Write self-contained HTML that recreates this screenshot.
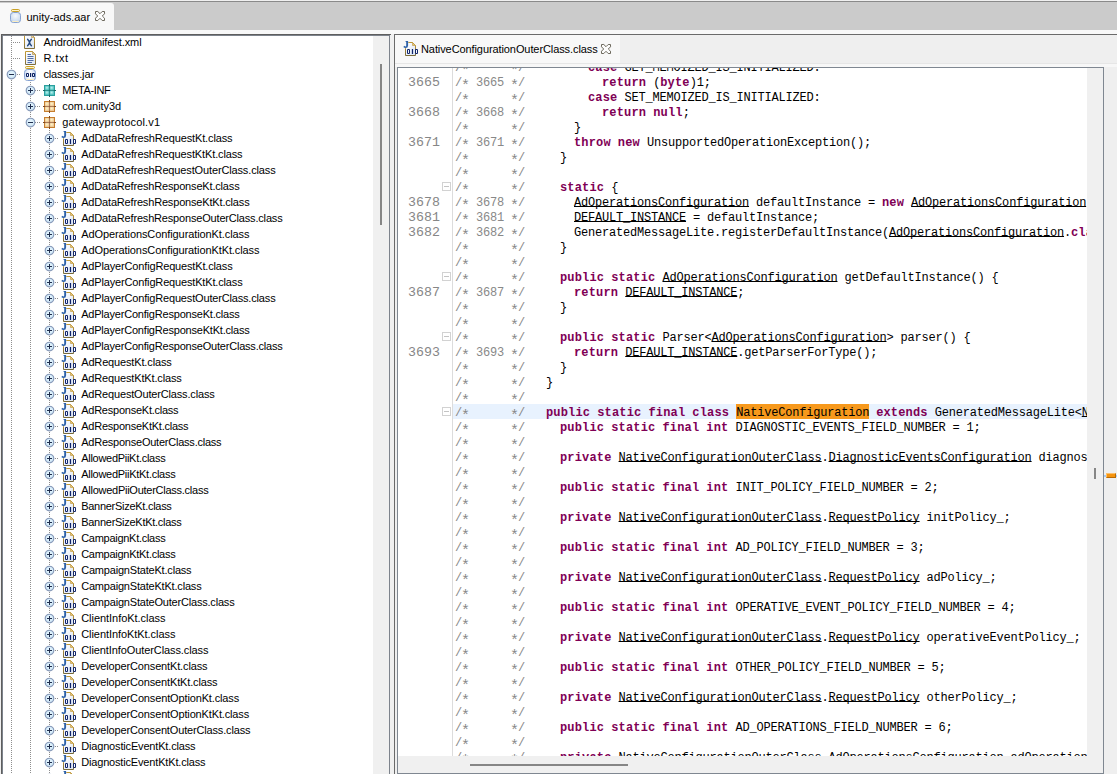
<!DOCTYPE html>
<html><head><meta charset="utf-8"><title>JD-GUI</title>
<style>
*{margin:0;padding:0;box-sizing:border-box}
html,body{width:1117px;height:774px;overflow:hidden;background:#f0f0f0}
body{position:relative;font-family:"Liberation Sans",sans-serif;font-size:11px;color:#000}
.ab,.hd,.vd,.tl,.cl,.gn,.fold,.hl,.r{position:absolute;display:block}
.r{position:absolute}
.tl{height:16px;line-height:16px;white-space:nowrap;font-size:11px;letter-spacing:-0.17px}
.hd{height:1px;background:repeating-linear-gradient(90deg,#8e8e8e 0 1px,transparent 1px 2px)}
.vd{width:1px;background:repeating-linear-gradient(180deg,#8e8e8e 0 1px,transparent 1px 2px)}
#tree{position:absolute;left:3px;top:36px;width:386px;height:738px;background:#fff;overflow:hidden}
#treein{position:absolute;left:-3px;top:-36px;width:400px;height:800px}
#code{position:absolute;left:398px;top:68px;width:689px;height:688px;background:#fff;overflow:hidden}
#codein{position:absolute;left:-398px;top:-68px;width:1117px;height:900px}
.cl{height:15px;line-height:15px;white-space:pre;font-family:"Liberation Mono",monospace;font-size:12px;letter-spacing:-0.2px;color:#000}
.c{color:#888}
.as{position:absolute;font-family:"Liberation Mono",monospace;font-size:15px;line-height:20px;height:20px;color:#888}
.k{color:#7f0055;font-weight:bold;letter-spacing:0.17px}
.u{text-decoration:underline;text-decoration-thickness:1px;text-underline-offset:0px;text-decoration-skip-ink:none}
.m{background:#f7991c}
.hl{left:453px;width:640px;height:15px;background:#e8f2fe}
.gn{left:398px;width:42px;text-align:right;height:15px;line-height:15px;font-family:"Liberation Mono",monospace;font-size:13.3px;color:#868686;white-space:pre}
.fold{left:442px;width:9px;height:9px;border:1px solid #d2d2d2;background:#fff}
.fold:after{content:"";position:absolute;left:1px;top:3px;width:5px;height:1px;background:#c4c4c4}
.tabt{position:absolute;white-space:nowrap;font-size:11px;height:16px;line-height:16px}
</style></head>
<body>
<svg width="0" height="0" style="position:absolute">
<defs>
<radialGradient id="gex" cx="0.5" cy="0.45" r="0.6"><stop offset="0" stop-color="#eefaff"/><stop offset="0.6" stop-color="#d4ebf9"/><stop offset="1" stop-color="#b0c3dc"/></radialGradient>
<linearGradient id="gpg" x1="0" y1="0" x2="1" y2="1"><stop offset="0" stop-color="#ffffff"/><stop offset="1" stop-color="#dbe5f5"/></linearGradient>
<radialGradient id="gtan" cx="0.45" cy="0.4" r="0.6"><stop offset="0" stop-color="#fff6c4"/><stop offset="0.5" stop-color="#f7dfb0"/><stop offset="1" stop-color="#ebc795"/></radialGradient>
<radialGradient id="gteal" cx="0.45" cy="0.4" r="0.6"><stop offset="0" stop-color="#c4f0ee"/><stop offset="0.5" stop-color="#86dad8"/><stop offset="1" stop-color="#52c2c0"/></radialGradient>
<linearGradient id="gjar" x1="0" y1="0" x2="1" y2="0"><stop offset="0" stop-color="#c9d9f2"/><stop offset="0.5" stop-color="#ffffff"/><stop offset="1" stop-color="#c9d9f2"/></linearGradient>
<radialGradient id="gjar0" cx="0.5" cy="0.35" r="0.65"><stop offset="0" stop-color="#f6f9fd"/><stop offset="1" stop-color="#c4d6ee"/></radialGradient>
<linearGradient id="gout" gradientUnits="userSpaceOnUse" x1="0" y1="0" x2="0" y2="16"><stop offset="0" stop-color="#c59c33"/><stop offset="0.5" stop-color="#ab8a3a"/><stop offset="1" stop-color="#75683a"/></linearGradient>
</defs>
<!-- expander plus -->
<symbol id="exp" viewBox="0 0 11 11">
<circle cx="5.5" cy="5.5" r="4.3" fill="url(#gex)" stroke="#8497b7" stroke-width="1.15"/>
<path d="M3 5.5H8M5.5 3V8" stroke="#1e2c4c" stroke-width="1" fill="none"/>
</symbol>
<!-- expander minus -->
<symbol id="exm" viewBox="0 0 11 11">
<circle cx="5.5" cy="5.5" r="4.3" fill="url(#gex)" stroke="#8497b7" stroke-width="1.15"/>
<path d="M3 5.5H8" stroke="#1e2c4c" stroke-width="1" fill="none"/>
</symbol>
<!-- class file -->
<symbol id="icls" viewBox="0 0 16 16">
<path d="M3 3H9.5L12.5 5.5V15.5H2.5V8Z" fill="url(#gpg)"/>
<path d="M5.3 2.5H9.5L12.5 5.5V15.5H2.5V8.2" fill="none" stroke="url(#gout)" stroke-width="1"/>
<path d="M9.5 2.5V5.5H12.5Z" fill="#e6c479" stroke="#bd9537" stroke-width="0.6"/>
<path d="M2.6 0.9H5.1V5.6Q5.1 8.1 2.7 8.1Q1.2 8.1 0.3 7L1.4 5.8Q1.9 6.6 2.6 6.6Q3.2 6.6 3.2 5.6V2.1H2.6Z" fill="#2d61a8"/>
<g fill="#10246a" fill-rule="evenodd">
<path d="M5.1 9H5.9Q7 9 7 10.1V12.9Q7 14 5.9 14H5.1Q4 14 4 12.9V10.1Q4 9 5.1 9ZM5 10.1V12.9H6V10.1Z"/>
<rect x="8.85" y="9" width="1.25" height="5"/>
<path d="M13.1 9H13.9Q15 9 15 10.1V12.9Q15 14 13.9 14H13.1Q12 14 12 12.9V10.1Q12 9 13.1 9ZM13 10.1V12.9H14V10.1Z"/>
</g>
</symbol>
<!-- package tan -->
<symbol id="ipkg" viewBox="0 0 16 16">
<rect x="3.5" y="3.5" width="10" height="10" fill="#ecc795" stroke="#c67d2d" stroke-width="1"/>
<rect x="4.2" y="4.2" width="3.8" height="3.8" fill="url(#gtan)"/><rect x="9" y="4.2" width="3.8" height="3.8" fill="url(#gtan)"/>
<rect x="4.2" y="9" width="3.8" height="3.8" fill="url(#gtan)"/><rect x="9" y="9" width="3.8" height="3.8" fill="url(#gtan)"/>
<path d="M4 8.5H13M8.5 4V13" stroke="#ad7c5a" stroke-width="1" fill="none"/>
<path d="M2 8.5H4.2M12.8 8.5H15M8.5 2V4.2M8.5 12.8V15" stroke="#7d4a1d" stroke-width="1" fill="none"/>
<rect x="7.9" y="7.9" width="1.2" height="1.2" fill="#8a5a40"/>
</symbol>
<!-- package teal -->
<symbol id="ipkgt" viewBox="0 0 16 16">
<rect x="3.5" y="3.5" width="10" height="10" fill="#52c2c0" stroke="#2aa09e" stroke-width="1"/>
<rect x="4.2" y="4.2" width="3.8" height="3.8" fill="url(#gteal)"/><rect x="9" y="4.2" width="3.8" height="3.8" fill="url(#gteal)"/>
<rect x="4.2" y="9" width="3.8" height="3.8" fill="url(#gteal)"/><rect x="9" y="9" width="3.8" height="3.8" fill="url(#gteal)"/>
<path d="M4 8.5H13M8.5 4V13" stroke="#2c908e" stroke-width="1" fill="none"/>
<path d="M2 8.5H4.2M12.8 8.5H15M8.5 2V4.2M8.5 12.8V15" stroke="#1b6766" stroke-width="1" fill="none"/>
<rect x="7.9" y="7.9" width="1.2" height="1.2" fill="#1f7472"/>
</symbol>
<!-- xml file (page 24..35 x 35..49 ; icon origin 22,34) -->
<symbol id="ixml" viewBox="0 0 16 16">
<path d="M2.5 0.5H9.5L12.5 3.5V14.5H2.5Z" fill="url(#gpg)" stroke="url(#gout)" stroke-width="1"/>
<path d="M9.5 0.5V3.5H12.5Z" fill="#e9cf95" stroke="#b4924f" stroke-width="0.6"/>
<path d="M5.6 5.3Q7.1 7 7.5 8.5T9.4 11.7M9.4 5.3Q7.9 7 7.5 8.5T5.6 11.7" stroke="#1f457d" stroke-width="1.35" fill="none" stroke-linecap="round"/>
</symbol>
<!-- txt file (page 25..36 x 51..65 ; icon origin 22,50) -->
<symbol id="itxt" viewBox="0 0 16 16">
<path d="M3.5 1.5H10.5L13.5 4.5V14.5H3.5Z" fill="url(#gpg)" stroke="url(#gout)" stroke-width="1"/>
<path d="M10.5 1.5V4.5H13.5Z" fill="#e9cf95" stroke="#a9883f" stroke-width="0.6"/>
<path d="M5.5 4.5H9M5.5 6.5H11.5M5.5 8.5H11.5M5.5 10.5H11.5M5.5 12.5H10" stroke="#506ca5" stroke-width="1" fill="none"/>
</symbol>
<!-- jar with 010 (lid 25..35 x 66..69 ; body 24..36 x 69..81 ; icon origin 22,66) -->
<symbol id="ijar" viewBox="0 0 16 16">
<rect x="2.5" y="3.5" width="11" height="11" rx="3" fill="url(#gjar)" stroke="#86a2d2" stroke-width="1"/>
<rect x="3.5" y="0.5" width="9" height="2" rx="1" fill="#fdf3cd" stroke="#c9a128" stroke-width="1"/>
<path d="M4 13.5H12" stroke="#fbeec0" stroke-width="1"/>
<g fill="#0c2162" fill-rule="evenodd">
<path d="M5 7H6Q7 7 7 8V10Q7 11 6 11H5Q4 11 4 10V8Q4 7 5 7ZM5 8.1V9.9H6V8.1Z"/>
<rect x="8" y="7" width="1.2" height="4"/>
<path d="M11 7H12Q13 7 13 8V10Q13 11 12 11H11Q10 11 10 10V8Q10 7 11 7ZM11 8.1V9.9H12V8.1Z"/>
</g>
</symbol>
<!-- plain jar (tab icon) 10..21 x 9..23 ; origin 8,8 -->
<symbol id="ijar0" viewBox="0 0 16 16">
<rect x="2.5" y="4.5" width="10" height="10" rx="2.8" fill="url(#gjar0)" stroke="#86a2d2" stroke-width="1"/>
<rect x="3.5" y="1.5" width="8" height="2" rx="1" fill="#fdf3cd" stroke="#c9a128" stroke-width="1"/>
<path d="M4.2 13.5H10.8" stroke="#fbeec0" stroke-width="1"/>
</symbol>
<!-- close X -->
<symbol id="close" viewBox="0 0 12 12">
<path d="M1.5 1.5H3.8L6 3.7L8.2 1.5H10.5V3.8L8.3 6L10.5 8.2V10.5H8.2L6 8.3L3.8 10.5H1.5V8.2L3.7 6L1.5 3.8Z" fill="#fcfcfc" stroke="#6c685c" stroke-width="1"/>
</symbol>
</svg>

<!-- top chrome -->
<div class="r" style="left:0;top:0;width:1117px;height:1px;background:#f0f0f0"></div>
<div class="r" style="left:0;top:1px;width:1117px;height:1px;background:#8a8a8a"></div>
<div class="r" style="left:0;top:2px;width:1117px;height:28px;background:#cbcbcb"></div>
<div class="r" style="left:0;top:30px;width:1117px;height:4px;background:#f8f8f8"></div>
<!-- left tab -->
<div class="r" style="left:0;top:3px;width:113.5px;height:31px;background:#f8f8f8;border-top-right-radius:3px"></div>
<svg class="ab" style="left:8px;top:8px" width="16" height="16"><use href="#ijar0"/></svg>
<span class="tabt" style="left:26.5px;top:9px">unity-ads.aar</span>
<svg class="ab" style="left:94px;top:10px" width="12" height="12"><use href="#close"/></svg>
<!-- content border line -->
<div class="r" style="left:1px;top:34px;width:390px;height:1px;background:#5e5e5e"></div>
<div class="r" style="left:1px;top:34px;width:1px;height:740px;background:#5e5e5e"></div>
<!-- tree scroll pane -->
<div class="r" style="left:2px;top:35px;width:388px;height:740px;background:#7d838c"></div>
<div id="tree"><div id="treein">
<i class="hd" style="left:13px;top:42px;width:8px"></i><svg class="ab" style="left:22px;top:34px" width="16" height="16"><use href="#ixml"/></svg><span class="tl" style="left:43.4px;top:34px;letter-spacing:-0.077px">AndroidManifest.xml</span><i class="hd" style="left:13px;top:58px;width:8px"></i><svg class="ab" style="left:22px;top:50px" width="16" height="16"><use href="#itxt"/></svg><span class="tl" style="left:43.4px;top:50px;letter-spacing:0.535px">R.txt</span><i class="hd" style="left:17px;top:74px;width:4px"></i><svg class="ab" style="left:6px;top:69px" width="11" height="11"><use href="#exm"/></svg><svg class="ab" style="left:22px;top:66px" width="16" height="16"><use href="#ijar"/></svg><span class="tl" style="left:43.4px;top:66px;letter-spacing:-0.129px">classes.jar</span><i class="hd" style="left:35px;top:90px;width:6px"></i><svg class="ab" style="left:25px;top:85px" width="11" height="11"><use href="#exp"/></svg><svg class="ab" style="left:41px;top:82px" width="16" height="16"><use href="#ipkgt"/></svg><span class="tl" style="left:62.3px;top:82px;letter-spacing:-0.391px">META-INF</span><i class="hd" style="left:35px;top:106px;width:6px"></i><svg class="ab" style="left:25px;top:101px" width="11" height="11"><use href="#exp"/></svg><svg class="ab" style="left:41px;top:98px" width="16" height="16"><use href="#ipkg"/></svg><span class="tl" style="left:62.3px;top:98px;letter-spacing:-0.037px">com.unity3d</span><i class="hd" style="left:35px;top:122px;width:6px"></i><svg class="ab" style="left:25px;top:117px" width="11" height="11"><use href="#exm"/></svg><svg class="ab" style="left:41px;top:114px" width="16" height="16"><use href="#ipkg"/></svg><span class="tl" style="left:62.3px;top:114px;letter-spacing:0.179px">gatewayprotocol.v1</span><i class="hd" style="left:55px;top:138px;width:4px"></i><svg class="ab" style="left:44px;top:133px" width="11" height="11"><use href="#exp"/></svg><svg class="ab" style="left:61px;top:130px" width="16" height="16"><use href="#icls"/></svg><span class="tl" style="left:81.2px;top:130px;letter-spacing:-0.121px">AdDataRefreshRequestKt.class</span><i class="hd" style="left:55px;top:154px;width:4px"></i><svg class="ab" style="left:44px;top:149px" width="11" height="11"><use href="#exp"/></svg><svg class="ab" style="left:61px;top:146px" width="16" height="16"><use href="#icls"/></svg><span class="tl" style="left:81.2px;top:146px;letter-spacing:-0.126px">AdDataRefreshRequestKtKt.class</span><i class="hd" style="left:55px;top:170px;width:4px"></i><svg class="ab" style="left:44px;top:165px" width="11" height="11"><use href="#exp"/></svg><svg class="ab" style="left:61px;top:162px" width="16" height="16"><use href="#icls"/></svg><span class="tl" style="left:81.2px;top:162px;letter-spacing:-0.139px">AdDataRefreshRequestOuterClass.class</span><i class="hd" style="left:55px;top:186px;width:4px"></i><svg class="ab" style="left:44px;top:181px" width="11" height="11"><use href="#exp"/></svg><svg class="ab" style="left:61px;top:178px" width="16" height="16"><use href="#icls"/></svg><span class="tl" style="left:81.2px;top:178px;letter-spacing:-0.171px">AdDataRefreshResponseKt.class</span><i class="hd" style="left:55px;top:202px;width:4px"></i><svg class="ab" style="left:44px;top:197px" width="11" height="11"><use href="#exp"/></svg><svg class="ab" style="left:61px;top:194px" width="16" height="16"><use href="#icls"/></svg><span class="tl" style="left:81.2px;top:194px;letter-spacing:-0.173px">AdDataRefreshResponseKtKt.class</span><i class="hd" style="left:55px;top:218px;width:4px"></i><svg class="ab" style="left:44px;top:213px" width="11" height="11"><use href="#exp"/></svg><svg class="ab" style="left:61px;top:210px" width="16" height="16"><use href="#icls"/></svg><span class="tl" style="left:81.2px;top:210px;letter-spacing:-0.178px">AdDataRefreshResponseOuterClass.class</span><i class="hd" style="left:55px;top:234px;width:4px"></i><svg class="ab" style="left:44px;top:229px" width="11" height="11"><use href="#exp"/></svg><svg class="ab" style="left:61px;top:226px" width="16" height="16"><use href="#icls"/></svg><span class="tl" style="left:81.2px;top:226px;letter-spacing:-0.091px">AdOperationsConfigurationKt.class</span><i class="hd" style="left:55px;top:250px;width:4px"></i><svg class="ab" style="left:44px;top:245px" width="11" height="11"><use href="#exp"/></svg><svg class="ab" style="left:61px;top:242px" width="16" height="16"><use href="#icls"/></svg><span class="tl" style="left:81.2px;top:242px;letter-spacing:-0.097px">AdOperationsConfigurationKtKt.class</span><i class="hd" style="left:55px;top:266px;width:4px"></i><svg class="ab" style="left:44px;top:261px" width="11" height="11"><use href="#exp"/></svg><svg class="ab" style="left:61px;top:258px" width="16" height="16"><use href="#icls"/></svg><span class="tl" style="left:81.2px;top:258px;letter-spacing:-0.159px">AdPlayerConfigRequestKt.class</span><i class="hd" style="left:55px;top:282px;width:4px"></i><svg class="ab" style="left:44px;top:277px" width="11" height="11"><use href="#exp"/></svg><svg class="ab" style="left:61px;top:274px" width="16" height="16"><use href="#icls"/></svg><span class="tl" style="left:81.2px;top:274px;letter-spacing:-0.162px">AdPlayerConfigRequestKtKt.class</span><i class="hd" style="left:55px;top:298px;width:4px"></i><svg class="ab" style="left:44px;top:293px" width="11" height="11"><use href="#exp"/></svg><svg class="ab" style="left:61px;top:290px" width="16" height="16"><use href="#icls"/></svg><span class="tl" style="left:81.2px;top:290px;letter-spacing:-0.169px">AdPlayerConfigRequestOuterClass.class</span><i class="hd" style="left:55px;top:314px;width:4px"></i><svg class="ab" style="left:44px;top:309px" width="11" height="11"><use href="#exp"/></svg><svg class="ab" style="left:61px;top:306px" width="16" height="16"><use href="#icls"/></svg><span class="tl" style="left:81.2px;top:306px;letter-spacing:-0.203px">AdPlayerConfigResponseKt.class</span><i class="hd" style="left:55px;top:330px;width:4px"></i><svg class="ab" style="left:44px;top:325px" width="11" height="11"><use href="#exp"/></svg><svg class="ab" style="left:61px;top:322px" width="16" height="16"><use href="#icls"/></svg><span class="tl" style="left:81.2px;top:322px;letter-spacing:-0.202px">AdPlayerConfigResponseKtKt.class</span><i class="hd" style="left:55px;top:346px;width:4px"></i><svg class="ab" style="left:44px;top:341px" width="11" height="11"><use href="#exp"/></svg><svg class="ab" style="left:61px;top:338px" width="16" height="16"><use href="#icls"/></svg><span class="tl" style="left:81.2px;top:338px;letter-spacing:-0.203px">AdPlayerConfigResponseOuterClass.class</span><i class="hd" style="left:55px;top:362px;width:4px"></i><svg class="ab" style="left:44px;top:357px" width="11" height="11"><use href="#exp"/></svg><svg class="ab" style="left:61px;top:354px" width="16" height="16"><use href="#icls"/></svg><span class="tl" style="left:81.2px;top:354px;letter-spacing:-0.149px">AdRequestKt.class</span><i class="hd" style="left:55px;top:378px;width:4px"></i><svg class="ab" style="left:44px;top:373px" width="11" height="11"><use href="#exp"/></svg><svg class="ab" style="left:61px;top:370px" width="16" height="16"><use href="#icls"/></svg><span class="tl" style="left:81.2px;top:370px;letter-spacing:-0.155px">AdRequestKtKt.class</span><i class="hd" style="left:55px;top:394px;width:4px"></i><svg class="ab" style="left:44px;top:389px" width="11" height="11"><use href="#exp"/></svg><svg class="ab" style="left:61px;top:386px" width="16" height="16"><use href="#icls"/></svg><span class="tl" style="left:81.2px;top:386px;letter-spacing:-0.167px">AdRequestOuterClass.class</span><i class="hd" style="left:55px;top:410px;width:4px"></i><svg class="ab" style="left:44px;top:405px" width="11" height="11"><use href="#exp"/></svg><svg class="ab" style="left:61px;top:402px" width="16" height="16"><use href="#icls"/></svg><span class="tl" style="left:81.2px;top:402px;letter-spacing:-0.239px">AdResponseKt.class</span><i class="hd" style="left:55px;top:426px;width:4px"></i><svg class="ab" style="left:44px;top:421px" width="11" height="11"><use href="#exp"/></svg><svg class="ab" style="left:61px;top:418px" width="16" height="16"><use href="#icls"/></svg><span class="tl" style="left:81.2px;top:418px;letter-spacing:-0.235px">AdResponseKtKt.class</span><i class="hd" style="left:55px;top:442px;width:4px"></i><svg class="ab" style="left:44px;top:437px" width="11" height="11"><use href="#exp"/></svg><svg class="ab" style="left:61px;top:434px" width="16" height="16"><use href="#icls"/></svg><span class="tl" style="left:81.2px;top:434px;letter-spacing:-0.228px">AdResponseOuterClass.class</span><i class="hd" style="left:55px;top:458px;width:4px"></i><svg class="ab" style="left:44px;top:453px" width="11" height="11"><use href="#exp"/></svg><svg class="ab" style="left:61px;top:450px" width="16" height="16"><use href="#icls"/></svg><span class="tl" style="left:81.2px;top:450px;letter-spacing:-0.281px">AllowedPiiKt.class</span><i class="hd" style="left:55px;top:474px;width:4px"></i><svg class="ab" style="left:44px;top:469px" width="11" height="11"><use href="#exp"/></svg><svg class="ab" style="left:61px;top:466px" width="16" height="16"><use href="#icls"/></svg><span class="tl" style="left:81.2px;top:466px;letter-spacing:-0.273px">AllowedPiiKtKt.class</span><i class="hd" style="left:55px;top:490px;width:4px"></i><svg class="ab" style="left:44px;top:485px" width="11" height="11"><use href="#exp"/></svg><svg class="ab" style="left:61px;top:482px" width="16" height="16"><use href="#icls"/></svg><span class="tl" style="left:81.2px;top:482px;letter-spacing:-0.257px">AllowedPiiOuterClass.class</span><i class="hd" style="left:55px;top:506px;width:4px"></i><svg class="ab" style="left:44px;top:501px" width="11" height="11"><use href="#exp"/></svg><svg class="ab" style="left:61px;top:498px" width="16" height="16"><use href="#icls"/></svg><span class="tl" style="left:81.2px;top:498px;letter-spacing:-0.277px">BannerSizeKt.class</span><i class="hd" style="left:55px;top:522px;width:4px"></i><svg class="ab" style="left:44px;top:517px" width="11" height="11"><use href="#exp"/></svg><svg class="ab" style="left:61px;top:514px" width="16" height="16"><use href="#icls"/></svg><span class="tl" style="left:81.2px;top:514px;letter-spacing:-0.269px">BannerSizeKtKt.class</span><i class="hd" style="left:55px;top:538px;width:4px"></i><svg class="ab" style="left:44px;top:533px" width="11" height="11"><use href="#exp"/></svg><svg class="ab" style="left:61px;top:530px" width="16" height="16"><use href="#icls"/></svg><span class="tl" style="left:81.2px;top:530px;letter-spacing:-0.279px">CampaignKt.class</span><i class="hd" style="left:55px;top:554px;width:4px"></i><svg class="ab" style="left:44px;top:549px" width="11" height="11"><use href="#exp"/></svg><svg class="ab" style="left:61px;top:546px" width="16" height="16"><use href="#icls"/></svg><span class="tl" style="left:81.2px;top:546px;letter-spacing:-0.269px">CampaignKtKt.class</span><i class="hd" style="left:55px;top:570px;width:4px"></i><svg class="ab" style="left:44px;top:565px" width="11" height="11"><use href="#exp"/></svg><svg class="ab" style="left:61px;top:562px" width="16" height="16"><use href="#icls"/></svg><span class="tl" style="left:81.2px;top:562px;letter-spacing:-0.195px">CampaignStateKt.class</span><i class="hd" style="left:55px;top:586px;width:4px"></i><svg class="ab" style="left:44px;top:581px" width="11" height="11"><use href="#exp"/></svg><svg class="ab" style="left:61px;top:578px" width="16" height="16"><use href="#icls"/></svg><span class="tl" style="left:81.2px;top:578px;letter-spacing:-0.195px">CampaignStateKtKt.class</span><i class="hd" style="left:55px;top:602px;width:4px"></i><svg class="ab" style="left:44px;top:597px" width="11" height="11"><use href="#exp"/></svg><svg class="ab" style="left:61px;top:594px" width="16" height="16"><use href="#icls"/></svg><span class="tl" style="left:81.2px;top:594px;letter-spacing:-0.197px">CampaignStateOuterClass.class</span><i class="hd" style="left:55px;top:618px;width:4px"></i><svg class="ab" style="left:44px;top:613px" width="11" height="11"><use href="#exp"/></svg><svg class="ab" style="left:61px;top:610px" width="16" height="16"><use href="#icls"/></svg><span class="tl" style="left:81.2px;top:610px;letter-spacing:-0.044px">ClientInfoKt.class</span><i class="hd" style="left:55px;top:634px;width:4px"></i><svg class="ab" style="left:44px;top:629px" width="11" height="11"><use href="#exp"/></svg><svg class="ab" style="left:61px;top:626px" width="16" height="16"><use href="#icls"/></svg><span class="tl" style="left:81.2px;top:626px;letter-spacing:-0.059px">ClientInfoKtKt.class</span><i class="hd" style="left:55px;top:650px;width:4px"></i><svg class="ab" style="left:44px;top:645px" width="11" height="11"><use href="#exp"/></svg><svg class="ab" style="left:61px;top:642px" width="16" height="16"><use href="#icls"/></svg><span class="tl" style="left:81.2px;top:642px;letter-spacing:-0.093px">ClientInfoOuterClass.class</span><i class="hd" style="left:55px;top:666px;width:4px"></i><svg class="ab" style="left:44px;top:661px" width="11" height="11"><use href="#exp"/></svg><svg class="ab" style="left:61px;top:658px" width="16" height="16"><use href="#icls"/></svg><span class="tl" style="left:81.2px;top:658px;letter-spacing:-0.143px">DeveloperConsentKt.class</span><i class="hd" style="left:55px;top:682px;width:4px"></i><svg class="ab" style="left:44px;top:677px" width="11" height="11"><use href="#exp"/></svg><svg class="ab" style="left:61px;top:674px" width="16" height="16"><use href="#icls"/></svg><span class="tl" style="left:81.2px;top:674px;letter-spacing:-0.147px">DeveloperConsentKtKt.class</span><i class="hd" style="left:55px;top:698px;width:4px"></i><svg class="ab" style="left:44px;top:693px" width="11" height="11"><use href="#exp"/></svg><svg class="ab" style="left:61px;top:690px" width="16" height="16"><use href="#icls"/></svg><span class="tl" style="left:81.2px;top:690px;letter-spacing:-0.138px">DeveloperConsentOptionKt.class</span><i class="hd" style="left:55px;top:714px;width:4px"></i><svg class="ab" style="left:44px;top:709px" width="11" height="11"><use href="#exp"/></svg><svg class="ab" style="left:61px;top:706px" width="16" height="16"><use href="#icls"/></svg><span class="tl" style="left:81.2px;top:706px;letter-spacing:-0.142px">DeveloperConsentOptionKtKt.class</span><i class="hd" style="left:55px;top:730px;width:4px"></i><svg class="ab" style="left:44px;top:725px" width="11" height="11"><use href="#exp"/></svg><svg class="ab" style="left:61px;top:722px" width="16" height="16"><use href="#icls"/></svg><span class="tl" style="left:81.2px;top:722px;letter-spacing:-0.158px">DeveloperConsentOuterClass.class</span><i class="hd" style="left:55px;top:746px;width:4px"></i><svg class="ab" style="left:44px;top:741px" width="11" height="11"><use href="#exp"/></svg><svg class="ab" style="left:61px;top:738px" width="16" height="16"><use href="#icls"/></svg><span class="tl" style="left:81.2px;top:738px;letter-spacing:-0.165px">DiagnosticEventKt.class</span><i class="hd" style="left:55px;top:762px;width:4px"></i><svg class="ab" style="left:44px;top:757px" width="11" height="11"><use href="#exp"/></svg><svg class="ab" style="left:61px;top:754px" width="16" height="16"><use href="#icls"/></svg><span class="tl" style="left:81.2px;top:754px;letter-spacing:-0.168px">DiagnosticEventKtKt.class</span><i class="hd" style="left:55px;top:778px;width:4px"></i><svg class="ab" style="left:44px;top:773px" width="11" height="11"><use href="#exp"/></svg><svg class="ab" style="left:61px;top:770px" width="16" height="16"><use href="#icls"/></svg><span class="tl" style="left:81.2px;top:770px;letter-spacing:-0.175px">DiagnosticEventOuterClass.class</span><i class="vd" style="left:11px;top:34px;height:36px"></i><i class="vd" style="left:11px;top:80px;height:700px"></i><i class="vd" style="left:30px;top:82px;height:4px"></i><i class="vd" style="left:30px;top:96px;height:6px"></i><i class="vd" style="left:30px;top:112px;height:6px"></i><i class="vd" style="left:30px;top:128px;height:650px"></i><i class="vd" style="left:49px;top:144px;height:5px"></i><i class="vd" style="left:49px;top:160px;height:5px"></i><i class="vd" style="left:49px;top:176px;height:5px"></i><i class="vd" style="left:49px;top:192px;height:5px"></i><i class="vd" style="left:49px;top:208px;height:5px"></i><i class="vd" style="left:49px;top:224px;height:5px"></i><i class="vd" style="left:49px;top:240px;height:5px"></i><i class="vd" style="left:49px;top:256px;height:5px"></i><i class="vd" style="left:49px;top:272px;height:5px"></i><i class="vd" style="left:49px;top:288px;height:5px"></i><i class="vd" style="left:49px;top:304px;height:5px"></i><i class="vd" style="left:49px;top:320px;height:5px"></i><i class="vd" style="left:49px;top:336px;height:5px"></i><i class="vd" style="left:49px;top:352px;height:5px"></i><i class="vd" style="left:49px;top:368px;height:5px"></i><i class="vd" style="left:49px;top:384px;height:5px"></i><i class="vd" style="left:49px;top:400px;height:5px"></i><i class="vd" style="left:49px;top:416px;height:5px"></i><i class="vd" style="left:49px;top:432px;height:5px"></i><i class="vd" style="left:49px;top:448px;height:5px"></i><i class="vd" style="left:49px;top:464px;height:5px"></i><i class="vd" style="left:49px;top:480px;height:5px"></i><i class="vd" style="left:49px;top:496px;height:5px"></i><i class="vd" style="left:49px;top:512px;height:5px"></i><i class="vd" style="left:49px;top:528px;height:5px"></i><i class="vd" style="left:49px;top:544px;height:5px"></i><i class="vd" style="left:49px;top:560px;height:5px"></i><i class="vd" style="left:49px;top:576px;height:5px"></i><i class="vd" style="left:49px;top:592px;height:5px"></i><i class="vd" style="left:49px;top:608px;height:5px"></i><i class="vd" style="left:49px;top:624px;height:5px"></i><i class="vd" style="left:49px;top:640px;height:5px"></i><i class="vd" style="left:49px;top:656px;height:5px"></i><i class="vd" style="left:49px;top:672px;height:5px"></i><i class="vd" style="left:49px;top:688px;height:5px"></i><i class="vd" style="left:49px;top:704px;height:5px"></i><i class="vd" style="left:49px;top:720px;height:5px"></i><i class="vd" style="left:49px;top:736px;height:5px"></i><i class="vd" style="left:49px;top:752px;height:5px"></i><i class="vd" style="left:49px;top:768px;height:5px"></i><i class="vd" style="left:49px;top:130px;height:3px"></i>
</div>
<div class="r" style="left:370px;top:0;width:16px;height:738px;background:#f0f0f0"></div>
<div class="r" style="left:377px;top:28px;width:2px;height:161px;background:#858585"></div>
</div>
<!-- right tabbed pane -->
<div class="r" style="left:394px;top:34px;width:723px;height:740px;background:#efefef;border-left:1px solid #6a6a6a;border-top:1px solid #6a6a6a"></div>
<div class="r" style="left:395px;top:35px;width:225px;height:29px;background:#f8f8f8"></div>
<div class="r" style="left:395px;top:63px;width:722px;height:1px;background:#e6e6e6"></div>
<div class="r" style="left:395px;top:64px;width:722px;height:3px;background:#f7f7f7"></div>
<svg class="ab" style="left:403px;top:40px" width="16" height="16"><use href="#icls"/></svg>
<span class="tabt" style="left:421px;top:41px;letter-spacing:-0.09px">NativeConfigurationOuterClass.class</span>
<svg class="ab" style="left:600px;top:43px" width="12" height="12"><use href="#close"/></svg>
<!-- code scroll pane border -->
<div class="r" style="left:397px;top:67px;width:707px;height:707px;border:1px solid #7f8791;background:#f0f0f0"></div>
<div id="code"><div id="codein">
<span class="cl c" style="left:455px;top:61px">/        /</span><span class="as" style="left:461px;top:62px">*</span><span class="as" style="left:510px;top:62px">*</span><span class="cl k" style="left:588.00px;top:61px">case</span><span class="cl" style="left:617.48px;top:61px"> GET_MEMOIZED_IS_INITIALIZED:</span><span class="cl c" style="left:455px;top:76px">/  3665  /</span><span class="as" style="left:461px;top:77px">*</span><span class="as" style="left:510px;top:77px">*</span><span class="cl k" style="left:602.00px;top:76px">return</span><span class="cl" style="left:646.22px;top:76px"> (</span><span class="cl k" style="left:660.22px;top:76px">byte</span><span class="cl" style="left:689.70px;top:76px">)1;</span><span class="cl c" style="left:455px;top:91px">/        /</span><span class="as" style="left:461px;top:92px">*</span><span class="as" style="left:510px;top:92px">*</span><span class="cl k" style="left:588.00px;top:91px">case</span><span class="cl" style="left:617.48px;top:91px"> SET_MEMOIZED_IS_INITIALIZED:</span><span class="cl c" style="left:455px;top:106px">/  3668  /</span><span class="as" style="left:461px;top:107px">*</span><span class="as" style="left:510px;top:107px">*</span><span class="cl k" style="left:602.00px;top:106px">return</span><span class="cl k" style="left:653.22px;top:106px">null</span><span class="cl" style="left:682.70px;top:106px">;</span><span class="cl c" style="left:455px;top:121px">/        /</span><span class="as" style="left:461px;top:122px">*</span><span class="as" style="left:510px;top:122px">*</span><span class="cl" style="left:574.00px;top:121px">}</span><span class="cl c" style="left:455px;top:136px">/  3671  /</span><span class="as" style="left:461px;top:137px">*</span><span class="as" style="left:510px;top:137px">*</span><span class="cl k" style="left:574.00px;top:136px">throw</span><span class="cl k" style="left:617.85px;top:136px">new</span><span class="cl" style="left:639.96px;top:136px"> UnsupportedOperationException();</span><span class="cl c" style="left:455px;top:151px">/        /</span><span class="as" style="left:461px;top:152px">*</span><span class="as" style="left:510px;top:152px">*</span><span class="cl" style="left:560.00px;top:151px">}</span><span class="cl c" style="left:455px;top:166px">/        /</span><span class="as" style="left:461px;top:167px">*</span><span class="as" style="left:510px;top:167px">*</span><span class="cl c" style="left:455px;top:181px">/        /</span><span class="as" style="left:461px;top:182px">*</span><span class="as" style="left:510px;top:182px">*</span><span class="cl k" style="left:560.00px;top:181px">static</span><span class="cl" style="left:604.22px;top:181px"> {</span><span class="cl c" style="left:455px;top:196px">/  3678  /</span><span class="as" style="left:461px;top:197px">*</span><span class="as" style="left:510px;top:197px">*</span><span class="cl u" style="left:574.00px;top:196px">AdOperationsConfiguration</span><span class="cl" style="left:749.00px;top:196px"> defaultInstance = </span><span class="cl k" style="left:882.00px;top:196px">new</span><span class="cl u" style="left:911.11px;top:196px">AdOperationsConfiguration</span><span class="cl" style="left:1086.11px;top:196px">();</span><span class="cl c" style="left:455px;top:211px">/  3681  /</span><span class="as" style="left:461px;top:212px">*</span><span class="as" style="left:510px;top:212px">*</span><span class="cl u" style="left:574.00px;top:211px">DEFAULT_INSTANCE</span><span class="cl" style="left:686.00px;top:211px"> = defaultInstance;</span><span class="cl c" style="left:455px;top:226px">/  3682  /</span><span class="as" style="left:461px;top:227px">*</span><span class="as" style="left:510px;top:227px">*</span><span class="cl" style="left:574.00px;top:226px">GeneratedMessageLite.registerDefaultInstance(</span><span class="cl u" style="left:889.00px;top:226px">AdOperationsConfiguration</span><span class="cl" style="left:1064.00px;top:226px">.</span><span class="cl k" style="left:1071.00px;top:226px">class</span><span class="cl" style="left:1107.85px;top:226px">, defaultInstance);</span><span class="cl c" style="left:455px;top:241px">/        /</span><span class="as" style="left:461px;top:242px">*</span><span class="as" style="left:510px;top:242px">*</span><span class="cl" style="left:560.00px;top:241px">}</span><span class="cl c" style="left:455px;top:256px">/        /</span><span class="as" style="left:461px;top:257px">*</span><span class="as" style="left:510px;top:257px">*</span><span class="cl c" style="left:455px;top:271px">/        /</span><span class="as" style="left:461px;top:272px">*</span><span class="as" style="left:510px;top:272px">*</span><span class="cl k" style="left:560.00px;top:271px">public</span><span class="cl k" style="left:611.22px;top:271px">static</span><span class="cl u" style="left:662.44px;top:271px">AdOperationsConfiguration</span><span class="cl" style="left:837.44px;top:271px"> getDefaultInstance() {</span><span class="cl c" style="left:455px;top:286px">/  3687  /</span><span class="as" style="left:461px;top:287px">*</span><span class="as" style="left:510px;top:287px">*</span><span class="cl k" style="left:574.00px;top:286px">return</span><span class="cl u" style="left:625.22px;top:286px">DEFAULT_INSTANCE</span><span class="cl" style="left:737.22px;top:286px">;</span><span class="cl c" style="left:455px;top:301px">/        /</span><span class="as" style="left:461px;top:302px">*</span><span class="as" style="left:510px;top:302px">*</span><span class="cl" style="left:560.00px;top:301px">}</span><span class="cl c" style="left:455px;top:316px">/        /</span><span class="as" style="left:461px;top:317px">*</span><span class="as" style="left:510px;top:317px">*</span><span class="cl c" style="left:455px;top:331px">/        /</span><span class="as" style="left:461px;top:332px">*</span><span class="as" style="left:510px;top:332px">*</span><span class="cl k" style="left:560.00px;top:331px">public</span><span class="cl k" style="left:611.22px;top:331px">static</span><span class="cl" style="left:655.44px;top:331px"> Parser&lt;</span><span class="cl u" style="left:711.44px;top:331px">AdOperationsConfiguration</span><span class="cl" style="left:886.44px;top:331px">&gt; parser() {</span><span class="cl c" style="left:455px;top:346px">/  3693  /</span><span class="as" style="left:461px;top:347px">*</span><span class="as" style="left:510px;top:347px">*</span><span class="cl k" style="left:574.00px;top:346px">return</span><span class="cl u" style="left:625.22px;top:346px">DEFAULT_INSTANCE</span><span class="cl" style="left:737.22px;top:346px">.getParserForType();</span><span class="cl c" style="left:455px;top:361px">/        /</span><span class="as" style="left:461px;top:362px">*</span><span class="as" style="left:510px;top:362px">*</span><span class="cl" style="left:560.00px;top:361px">}</span><span class="cl c" style="left:455px;top:376px">/        /</span><span class="as" style="left:461px;top:377px">*</span><span class="as" style="left:510px;top:377px">*</span><span class="cl" style="left:546.00px;top:376px">}</span><span class="cl c" style="left:455px;top:391px">/        /</span><span class="as" style="left:461px;top:392px">*</span><span class="as" style="left:510px;top:392px">*</span><div class="hl" style="top:404px"></div><span class="cl c" style="left:455px;top:406px">/        /</span><span class="as" style="left:461px;top:407px">*</span><span class="as" style="left:510px;top:407px">*</span><span class="cl k" style="left:546.00px;top:406px">public</span><span class="cl k" style="left:597.22px;top:406px">static</span><span class="cl k" style="left:648.44px;top:406px">final</span><span class="cl k" style="left:692.29px;top:406px">class</span><i class="r m" style="left:736px;top:404px;width:133px;height:15px"></i><span class="cl" style="left:736.14px;top:406px">NativeConfiguration</span><span class="cl k" style="left:876.14px;top:406px">extends</span><span class="cl" style="left:927.73px;top:406px"> GeneratedMessageLite&lt;</span><span class="cl u" style="left:1081.73px;top:406px">NativeConfiguration</span><span class="cl" style="left:1214.73px;top:406px">, </span><span class="cl u" style="left:1228.73px;top:406px">NativeConfiguration.Builder</span><span class="cl" style="left:1417.73px;top:406px">&gt;</span><span class="cl c" style="left:455px;top:421px">/        /</span><span class="as" style="left:461px;top:422px">*</span><span class="as" style="left:510px;top:422px">*</span><span class="cl k" style="left:560.00px;top:421px">public</span><span class="cl k" style="left:611.22px;top:421px">static</span><span class="cl k" style="left:662.44px;top:421px">final</span><span class="cl k" style="left:706.29px;top:421px">int</span><span class="cl" style="left:728.40px;top:421px"> DIAGNOSTIC_EVENTS_FIELD_NUMBER = 1;</span><span class="cl c" style="left:455px;top:436px">/        /</span><span class="as" style="left:461px;top:437px">*</span><span class="as" style="left:510px;top:437px">*</span><span class="cl c" style="left:455px;top:451px">/        /</span><span class="as" style="left:461px;top:452px">*</span><span class="as" style="left:510px;top:452px">*</span><span class="cl k" style="left:560.00px;top:451px">private</span><span class="cl u" style="left:618.59px;top:451px">NativeConfigurationOuterClass</span><span class="cl" style="left:821.59px;top:451px">.</span><span class="cl u" style="left:828.59px;top:451px">DiagnosticEventsConfiguration</span><span class="cl" style="left:1031.59px;top:451px"> diagnosticEvents_;</span><span class="cl c" style="left:455px;top:466px">/        /</span><span class="as" style="left:461px;top:467px">*</span><span class="as" style="left:510px;top:467px">*</span><span class="cl c" style="left:455px;top:481px">/        /</span><span class="as" style="left:461px;top:482px">*</span><span class="as" style="left:510px;top:482px">*</span><span class="cl k" style="left:560.00px;top:481px">public</span><span class="cl k" style="left:611.22px;top:481px">static</span><span class="cl k" style="left:662.44px;top:481px">final</span><span class="cl k" style="left:706.29px;top:481px">int</span><span class="cl" style="left:728.40px;top:481px"> INIT_POLICY_FIELD_NUMBER = 2;</span><span class="cl c" style="left:455px;top:496px">/        /</span><span class="as" style="left:461px;top:497px">*</span><span class="as" style="left:510px;top:497px">*</span><span class="cl c" style="left:455px;top:511px">/        /</span><span class="as" style="left:461px;top:512px">*</span><span class="as" style="left:510px;top:512px">*</span><span class="cl k" style="left:560.00px;top:511px">private</span><span class="cl u" style="left:618.59px;top:511px">NativeConfigurationOuterClass</span><span class="cl" style="left:821.59px;top:511px">.</span><span class="cl u" style="left:828.59px;top:511px">RequestPolicy</span><span class="cl" style="left:919.59px;top:511px"> initPolicy_;</span><span class="cl c" style="left:455px;top:526px">/        /</span><span class="as" style="left:461px;top:527px">*</span><span class="as" style="left:510px;top:527px">*</span><span class="cl c" style="left:455px;top:541px">/        /</span><span class="as" style="left:461px;top:542px">*</span><span class="as" style="left:510px;top:542px">*</span><span class="cl k" style="left:560.00px;top:541px">public</span><span class="cl k" style="left:611.22px;top:541px">static</span><span class="cl k" style="left:662.44px;top:541px">final</span><span class="cl k" style="left:706.29px;top:541px">int</span><span class="cl" style="left:728.40px;top:541px"> AD_POLICY_FIELD_NUMBER = 3;</span><span class="cl c" style="left:455px;top:556px">/        /</span><span class="as" style="left:461px;top:557px">*</span><span class="as" style="left:510px;top:557px">*</span><span class="cl c" style="left:455px;top:571px">/        /</span><span class="as" style="left:461px;top:572px">*</span><span class="as" style="left:510px;top:572px">*</span><span class="cl k" style="left:560.00px;top:571px">private</span><span class="cl u" style="left:618.59px;top:571px">NativeConfigurationOuterClass</span><span class="cl" style="left:821.59px;top:571px">.</span><span class="cl u" style="left:828.59px;top:571px">RequestPolicy</span><span class="cl" style="left:919.59px;top:571px"> adPolicy_;</span><span class="cl c" style="left:455px;top:586px">/        /</span><span class="as" style="left:461px;top:587px">*</span><span class="as" style="left:510px;top:587px">*</span><span class="cl c" style="left:455px;top:601px">/        /</span><span class="as" style="left:461px;top:602px">*</span><span class="as" style="left:510px;top:602px">*</span><span class="cl k" style="left:560.00px;top:601px">public</span><span class="cl k" style="left:611.22px;top:601px">static</span><span class="cl k" style="left:662.44px;top:601px">final</span><span class="cl k" style="left:706.29px;top:601px">int</span><span class="cl" style="left:728.40px;top:601px"> OPERATIVE_EVENT_POLICY_FIELD_NUMBER = 4;</span><span class="cl c" style="left:455px;top:616px">/        /</span><span class="as" style="left:461px;top:617px">*</span><span class="as" style="left:510px;top:617px">*</span><span class="cl c" style="left:455px;top:631px">/        /</span><span class="as" style="left:461px;top:632px">*</span><span class="as" style="left:510px;top:632px">*</span><span class="cl k" style="left:560.00px;top:631px">private</span><span class="cl u" style="left:618.59px;top:631px">NativeConfigurationOuterClass</span><span class="cl" style="left:821.59px;top:631px">.</span><span class="cl u" style="left:828.59px;top:631px">RequestPolicy</span><span class="cl" style="left:919.59px;top:631px"> operativeEventPolicy_;</span><span class="cl c" style="left:455px;top:646px">/        /</span><span class="as" style="left:461px;top:647px">*</span><span class="as" style="left:510px;top:647px">*</span><span class="cl c" style="left:455px;top:661px">/        /</span><span class="as" style="left:461px;top:662px">*</span><span class="as" style="left:510px;top:662px">*</span><span class="cl k" style="left:560.00px;top:661px">public</span><span class="cl k" style="left:611.22px;top:661px">static</span><span class="cl k" style="left:662.44px;top:661px">final</span><span class="cl k" style="left:706.29px;top:661px">int</span><span class="cl" style="left:728.40px;top:661px"> OTHER_POLICY_FIELD_NUMBER = 5;</span><span class="cl c" style="left:455px;top:676px">/        /</span><span class="as" style="left:461px;top:677px">*</span><span class="as" style="left:510px;top:677px">*</span><span class="cl c" style="left:455px;top:691px">/        /</span><span class="as" style="left:461px;top:692px">*</span><span class="as" style="left:510px;top:692px">*</span><span class="cl k" style="left:560.00px;top:691px">private</span><span class="cl u" style="left:618.59px;top:691px">NativeConfigurationOuterClass</span><span class="cl" style="left:821.59px;top:691px">.</span><span class="cl u" style="left:828.59px;top:691px">RequestPolicy</span><span class="cl" style="left:919.59px;top:691px"> otherPolicy_;</span><span class="cl c" style="left:455px;top:706px">/        /</span><span class="as" style="left:461px;top:707px">*</span><span class="as" style="left:510px;top:707px">*</span><span class="cl c" style="left:455px;top:721px">/        /</span><span class="as" style="left:461px;top:722px">*</span><span class="as" style="left:510px;top:722px">*</span><span class="cl k" style="left:560.00px;top:721px">public</span><span class="cl k" style="left:611.22px;top:721px">static</span><span class="cl k" style="left:662.44px;top:721px">final</span><span class="cl k" style="left:706.29px;top:721px">int</span><span class="cl" style="left:728.40px;top:721px"> AD_OPERATIONS_FIELD_NUMBER = 6;</span><span class="cl c" style="left:455px;top:736px">/        /</span><span class="as" style="left:461px;top:737px">*</span><span class="as" style="left:510px;top:737px">*</span><span class="cl c" style="left:455px;top:751px">/        /</span><span class="as" style="left:461px;top:752px">*</span><span class="as" style="left:510px;top:752px">*</span><span class="cl k" style="left:560.00px;top:751px">private</span><span class="cl u" style="left:618.59px;top:751px">NativeConfigurationOuterClass</span><span class="cl" style="left:821.59px;top:751px">.</span><span class="cl u" style="left:828.59px;top:751px">AdOperationsConfiguration</span><span class="cl" style="left:1003.59px;top:751px"> adOperations_;</span>
<div class="r" style="left:398px;top:68px;width:54px;height:700px;background:#fff"></div>
<div class="r" style="left:452px;top:68px;width:1px;height:700px;background:#dcdcdc"></div>
<span class="gn" style="top:75px">3665</span><span class="gn" style="top:105px">3668</span><span class="gn" style="top:135px">3671</span><i class="fold" style="top:182px"></i><span class="gn" style="top:195px">3678</span><span class="gn" style="top:210px">3681</span><span class="gn" style="top:225px">3682</span><i class="fold" style="top:272px"></i><span class="gn" style="top:285px">3687</span><i class="fold" style="top:332px"></i><span class="gn" style="top:345px">3693</span><i class="fold" style="top:407px"></i>
</div></div>
<!-- vertical scrollbar thumb -->
<div class="r" style="left:1094px;top:468px;width:2px;height:11px;background:#868686"></div>
<!-- horizontal scrollbar thumb -->
<div class="r" style="left:470px;top:764px;width:158px;height:2px;background:#868686"></div>
<!-- error strip -->
<div class="r" style="left:1104px;top:475px;width:13px;height:2px;background:#a5cdfb"></div>
<div class="r" style="left:1106px;top:473px;width:10px;height:5px;background:#f5940f;border:1px solid;border-color:#fbc06c #b86a05 #b86a05 #fbc06c"></div>
</body></html>
